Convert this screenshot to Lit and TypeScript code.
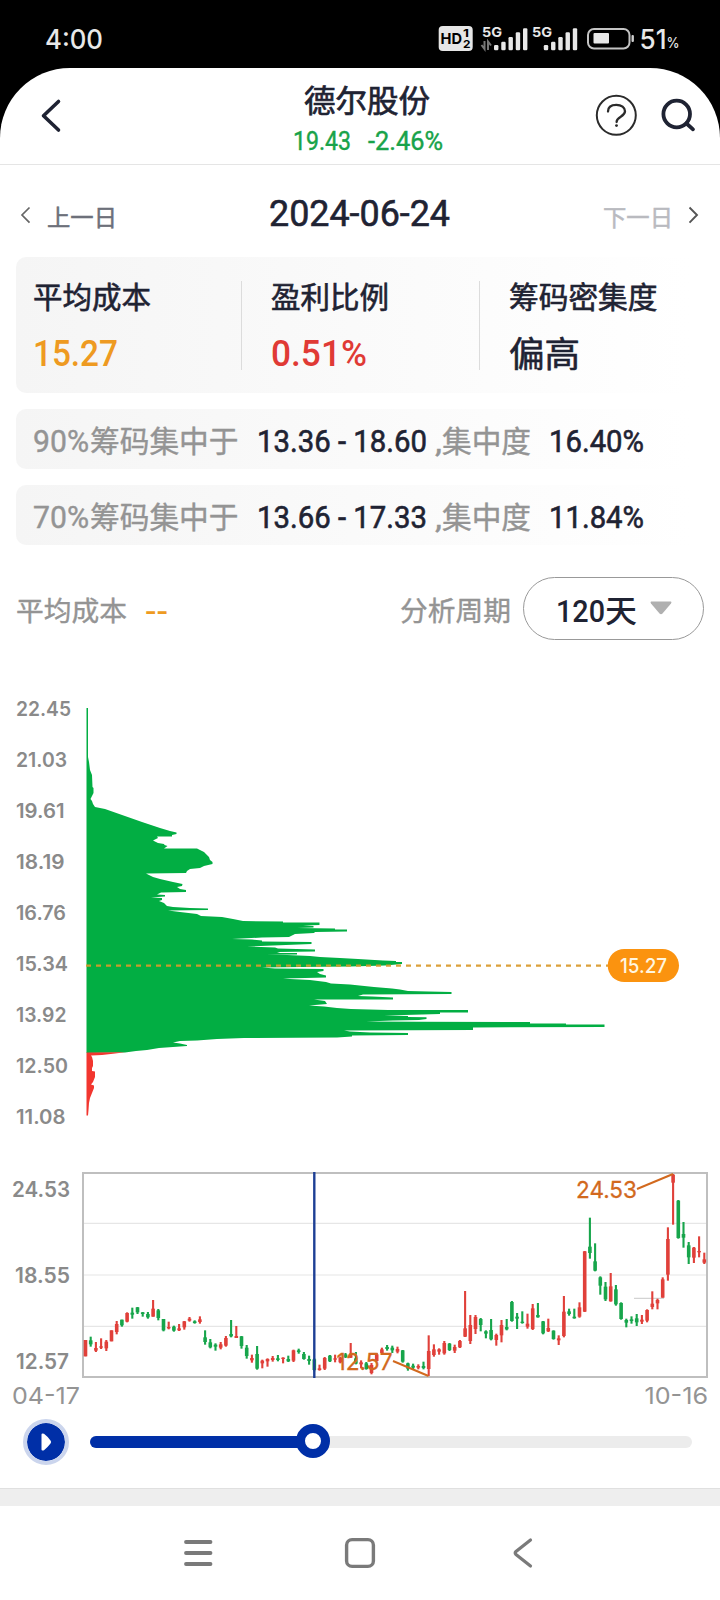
import { LitElement, html, svg, css } from "lit";
import { customElement, property } from "lit/decorators.js";

type Candle = [number, number, number, number, number];

const UP = "#e0403a";
const DOWN = "#17a54b";

/* [isUp, high, bodyTop, bodyBottom, low], measured in thirds of a pixel from the chart origin */
const CANDLES: Candle[] = [
  [1,570,570,619,619],[0,560,571,583,590],[1,576,594,602,606],[1,565,589,593,597],[1,570,575,595,603],
  [1,541,541,574,574],[1,513,522,546,553],[0,509,509,526,530],[1,487,489,515,517],[0,473,488,494,506],
  [0,471,472,487,492],[0,486,487,492,500],[0,486,492,502,506],[1,450,476,500,500],[0,477,481,504,511],
  [0,507,507,541,544],[1,515,531,535,538],[0,527,530,542,545],[1,522,535,541,543],[1,513,514,532,539],
  [1,501,506,512,515],[0,511,514,519,521],[1,499,508,516,521],[0,541,562,576,584],[0,567,577,592,595],
  [0,580,584,590,602],[1,576,583,593,598],[1,558,564,587,590],[0,510,552,559,562],[1,528,558,564,564],
  [0,558,559,588,596],[0,585,593,618,626],[1,614,624,631,638],[0,588,612,656,659],[1,629,632,640,655],
  [1,625,627,634,650],[1,618,624,630,635],[0,615,625,630,634],[1,622,623,627,640],[0,617,627,634,636],
  [1,599,601,632,636],[0,596,601,606,611],[0,606,612,627,629],[0,617,627,633,644],[0,625,628,660,664],
  [1,644,655,660,662],[1,621,624,656,660],[0,615,617,634,636],[1,614,625,629,637],[1,620,623,637,640],
  [0,609,613,622,624],[1,579,611,623,624],[0,606,625,641,643],[1,631,637,643,655],[0,636,640,657,659],
  [1,639,645,669,673],[1,609,613,633,634],[1,593,598,609,611],[0,585,591,597,602],[0,587,593,601,609],
  [1,590,597,605,610],[0,600,601,635,638],[0,638,640,656,662],[0,641,647,653,657],[1,643,648,653,658],
  [0,635,648,654,658],[1,556,603,657,678],[1,583,598,615,620],[1,595,598,605,614],[1,573,579,610,614],
  [0,579,581,600,603],[1,584,591,602,609],[1,570,573,592,594],[1,423,535,560,561],[1,495,525,573,582],
  [1,495,501,537,552],[0,504,507,525,544],[0,541,544,551,565],[0,507,540,568,571],[1,551,555,570,587],
  [1,510,525,556,577],[0,507,531,538,541],[0,453,456,513,515],[0,489,500,506,537],[0,484,515,519,521],
  [1,491,521,530,536],[1,462,475,537,540],[0,459,495,502,503],[0,513,514,550,553],[1,506,534,544,546],
  [0,541,542,567,569],[1,556,565,571,585],[1,438,485,558,562],[0,476,484,492,497],[0,476,500,505,506],
  [1,457,472,500,503],[1,303,304,485,486],[0,203,290,309,326],[0,280,334,362,364],[0,379,382,407,434],
  [0,396,410,448,453],[1,369,409,454,455],[0,405,418,463,467],[0,457,459,507,509],[0,506,510,518,532],
  [0,499,508,513,521],[0,492,505,517,528],[1,495,509,515,522],[1,478,480,512,517],[1,424,461,471,478],
  [1,446,450,460,478],[1,382,388,443,443],[1,232,267,374,392],[1,72,74,98,224],[0,150,152,264,266],
  [0,216,252,263,293],[0,276,286,322,342],[1,291,293,323,339],[1,259,303,307,322],[1,308,328,338,342],
];

const LOSS_AREA =
  "86.5,708 88,708 88,757 89,762 90,770 92,775 92.5,787 93.5,788 93.5,793 91.5,797 90.5,799 92,801 93,804 95,807 105,809 " +
  "142,822 160,828 170,831 176.5,832.5 176.5,834 172,835 172,836.5 157,836.5 158,838 153,840.5 158,843 164,844 164.5,845 " +
  "167.5,846 164,848.5 197,848.5 204,852 209,857 210,860 212.5,862 212.5,864 204,866 200,868 190,869 187,871 186,873 " +
  "146,873.5 151,876 153,877 160,879 173,882 182.5,884 182,886 177,887 180,889 186,890 186,892 161,892.5 157,894.5 165,895 " +
  "165,896.5 151,897.5 162,898 162,900 159,901 164,903 167,906 173,907 190,908 208,908.5 208,910 168,910.5 180,912 197,914 " +
  "201,916 222,917 233,919 243,921 283,921.5 283,922.5 319.5,922.5 319.5,925 303,925.5 313.5,926 313.5,927.5 297,928 " +
  "335,928.5 335,929.5 347,929.5 347,931.5 315,932 314,933 295,934 289,937 262,937.5 232,939 252,939.5 262,940.5 262,941.5 " +
  "311.5,942 311.5,944 273,945.5 247,946.5 275,947.5 278,948.5 315,949.5 315,951.5 277,952 280,953 297,953 297,954.5 " +
  "266,954.8 287,955 310,956 320,957 340,958 358,959 383,960.5 396,961 396,962 402,962 402,964 385,965.5 350,966.5 " +
  "300,967 262,967.5 275,968.5 323.5,969 323.5,971 317,972 320,974 326,975.5 326,977.5 305,978 283,978.5 290,979 310,980 " +
  "318,981 326,982 331,983.5 350,984.5 374,987 392,988.5 400,989.5 408,991 428.5,991.5 451.5,992 451.5,994 363,994.5 " +
  "358,996 372,996.5 393,997.5 393,999.5 314,999.5 325,1001 327,1004 309,1005.5 324,1006.5 337,1008 351,1009 388,1010 " +
  "468,1010 468,1012.5 440,1012.5 440,1014 422,1014.5 404,1015 384,1015.5 408,1016 408,1017 426.5,1017.2 426.5,1019 " +
  "419,1020 393,1020.5 366,1021.5 417,1021.7 530,1022 530,1023.5 566,1023.5 566,1024.5 604.5,1024.5 604.5,1027 473,1027.5 " +
  "473,1030 344,1030.5 350,1031.5 370,1032.5 408,1033 408,1035 352,1035.5 352,1036.5 337,1037.5 244,1038 217,1039 " +
  "197,1040.5 180,1041 173,1042.5 180,1043.5 187,1045 187,1046 159,1048 147,1050 136,1051 125,1052.5 86.5,1053";

const PROFIT_AREA =
  "86.5,1052.5 125,1052.2 113,1053.7 102,1055 91,1055.5 92,1057 93,1061 93,1066 92,1068 92,1071 95,1071.5 95,1077 93,1082 " +
  "91,1084.5 94,1085.5 94,1088 92,1093 90,1098 89,1103 88.5,1110 88,1115.5 86.5,1115.5";

/* Text set to an exact advance width; its box bottom is the baseline. */
@customElement("fit-text")
class FitText extends LitElement {
  @property() text = "";
  @property({ type: Number }) w = 0;
  @property({ type: Number }) size = 20;

  static styles = css`
    :host { display: block; flex: none; }
    svg { display: block; overflow: visible; }
    text { fill: currentColor; stroke: currentColor; stroke-width: var(--grade, 0.4px); white-space: pre; }
  `;

  render() {
    const h = Math.round(this.size * 0.72);
    return html`<svg width=${this.w} height=${h}>
      <text x="0" y=${h} font-size=${this.size} textLength=${this.w} lengthAdjust="spacingAndGlyphs">${this.text}</text>
    </svg>`;
  }
}

const t = (text: string, w: number, size: number, cls = "") =>
  html`<fit-text class=${cls} .text=${text} .w=${w} .size=${size}></fit-text>`;

const st = (text: string, x: number, y: number, w: number, size: number, cls: string) =>
  svg`<text class=${cls} x=${x} y=${y} font-size=${size} textLength=${w} lengthAdjust="spacingAndGlyphs">${text}</text>`;

@customElement("app-root")
class AppRoot extends LitElement {
  static styles = css`
    * { box-sizing: border-box; }
    :host {
      display: block; width: 720px; height: 1600px; overflow: hidden; background: #000;
      font-family: Roboto, "Noto Sans CJK SC", sans-serif; color: #1f2333;
    }
    svg { display: block; }
    .ui { font-family: Inter, "Noto Sans CJK SC", sans-serif; }
    .m { font-weight: 500; --grade: 0; }
    .status { height: 68px; display: flex; justify-content: space-between; color: #e8e8e8; }
    .clock { padding: 30px 0 0 45px; }
    .sheet { height: 1532px; background: #fff; border-radius: 70px 70px 0 0; overflow: hidden; display: flex; flex-direction: column; }
    .header { height: 97px; border-bottom: 1px solid #e5e5e5; display: grid; grid-template-columns: 293px 1fr 130px; }
    .title { display: flex; flex-direction: column; gap: 19px; padding-top: 22px; }
    .title .name { margin-left: 11px; --grade: 0.7px; }
    .quote { display: flex; gap: 17px; color: #18a34a; margin-top: 1px; }
    .dates { height: 92px; display: grid; grid-template-columns: 47px 222px 334px 69px 1fr; }
    .dates .prev { color: #6d707a; margin-top: 44px; --grade: 0.5px; }
    .dates .day { margin-top: 35px; --grade: 0.6px; }
    .dates .next { color: #b9babf; margin-top: 44px; --grade: 0.5px; }
    .card { margin: 0 16px; border-radius: 10px; background: linear-gradient(90deg, #f5f5f5, #fff 98%); flex: none; }
    .stats { height: 136px; display: grid; grid-template-columns: 225px 238px 1fr; padding-top: 24px; }
    .stat { height: 89px; padding: 6px 0 0 17px; display: flex; flex-direction: column; gap: 32px; --grade: 0.6px; }
    .stat + .stat { border-left: 1px solid #dcdcdc; padding-left: 28.5px; }
    .low { margin-top: 2px; }
    .orange { color: #ee9a21; }
    .red { color: #e03a35; }
    .range { height: 60px; margin-top: 16px; display: flex; align-items: flex-end; padding: 0 0 17px 17px; }
    .grey { color: #949494; }
    .gap-s { margin-left: 1px; }
    .gap-l { margin-left: 18px; }
    .gap-c { margin-left: 8px; }
    .range .gap-l { --grade: 0.6px; }
    .filter { height: 63px; margin: 32px 16px 0; display: flex; align-items: flex-end; flex: none; }
    .filter > fit-text { margin-bottom: 19px; }
    .filter .dash { margin: 0 0 18px 18px; }
    .filter .period { margin-left: auto; }
    .pill { margin-left: 12px; width: 181px; height: 63px; border: 1px solid #999; border-radius: 32px; display: flex; align-items: flex-end; padding: 0 0 17px 32px; }
    .pill svg { margin: 0 0 7px 13px; }
    .charts { flex: none; }
    .axis { font-family: Inter, sans-serif; font-weight: 600; fill: #8a8a8a; }
    .edge { font-family: Inter, sans-serif; font-weight: 400; fill: #949494; }
    .note { font-family: Inter, sans-serif; font-weight: 400; fill: #d2691e; stroke: #d2691e; stroke-width: 0.3px; }
    .badge { font-family: Inter, sans-serif; font-weight: 500; fill: #fff6e0; }
    .ink { font-family: Inter, sans-serif; font-weight: 700; fill: #000; }
    .sig { font-family: Inter, sans-serif; font-weight: 700; fill: #e8e8e8; }
    .num { font-family: Inter, sans-serif; font-weight: 500; fill: #e8e8e8; }
    .player { height: 78px; flex: none; display: flex; align-items: center; padding: 0 28px 14px 23px; gap: 21px; }
    .play { width: 46px; height: 46px; border-radius: 50%; border: 4px solid #cbd5ed; background: #002fa7; background-clip: padding-box; display: grid; place-items: center; }
    .track { flex: 1; height: 12px; border-radius: 6px; background: #ececec; }
    .fill { height: 12px; width: 223px; border-radius: 6px 0 0 6px; background: #002fa7; position: relative; }
    .thumb { position: absolute; right: -17px; top: -12px; width: 34px; height: 34px; border-radius: 50%; border: 9px solid #002fa7; background: #fff; }
    .band { height: 18px; flex: none; background: #eee; border-top: 1px solid #e0e0e0; }
    .nav { flex: none; }
  `;

  private bars(x: number) {
    return [45, 41.7, 37, 32.3, 28.3].map(
      (y, i) => svg`<rect x=${x + i * 7.25} y=${y} width="4.4" height=${50.3 - y} rx="1.2" fill="#e8e8e8"/>`);
  }

  private statusBar() {
    return html`<div class="status">
      <div class="clock ui m">${t("4:00", 58, 26.5)}</div>
      <svg width="290" height="68" viewBox="430 0 290 68">
        <rect x="438.7" y="26" width="34" height="25" rx="4" fill="#e6e6e6"/>
        ${st("HD", 440.5, 44, 21.5, 15, "ink")}
        ${st("1", 463, 37, 6, 11, "ink")}
        ${st("2", 463, 48, 7.5, 11, "ink")}
        ${st("5G", 482, 37, 20, 13.5, "sig")}
        ${st("5G", 532, 37, 20, 13.5, "sig")}
        <path d="M481.5 45 L484.5 49 V41 M488 50 V41.5 L491 45.5" fill="none" stroke="#777" stroke-width="2"/>
        ${this.bars(494)}${this.bars(543.8)}
        <rect x="588" y="29" width="41.5" height="19.5" rx="6" fill="none" stroke="#c4c4c4" stroke-width="2"/>
        <rect x="593.5" y="33" width="15.5" height="10.5" rx="1" fill="#e8e8e8"/>
        <rect x="631.5" y="35" width="2.4" height="7" rx="1" fill="#d0d0d0"/>
        ${st("51", 639.5, 49, 27, 26.5, "num")}
        ${st("%", 666.5, 48, 13, 14.5, "num")}
      </svg>
    </div>`;
  }

  private header() {
    return html`<div class="header">
      <svg width="100" height="96" viewBox="0 68 100 96">
        <path d="M58.5 101.5 L43.5 115.7 L58.5 130" fill="none" stroke="#1f2333" stroke-width="3.6" stroke-linecap="round" stroke-linejoin="round"/>
      </svg>
      <div class="title">
        ${t("德尔股份", 126, 31, "name")}
        <div class="quote">${t("19.43", 58, 25)}${t("-2.46%", 75, 25)}</div>
      </div>
      <svg width="130" height="96" viewBox="590 68 130 96">
        <circle cx="616.3" cy="115.3" r="19.5" fill="none" stroke="#2b2b2b" stroke-width="2"/>
        <path d="M608 111.5 C608 107 611.5 104.8 616.3 104.8 C621.5 104.8 625 107.6 625 111.3 C625 117 616.6 116.5 616.6 122" fill="none" stroke="#2b2b2b" stroke-width="2.3" stroke-linecap="round"/>
        <circle cx="616.5" cy="125.6" r="1.4" fill="#2b2b2b"/>
        <circle cx="676.7" cy="114" r="13.3" fill="none" stroke="#1f2333" stroke-width="3.8"/>
        <path d="M686.5 123.5 L693 129.3" stroke="#1f2333" stroke-width="3.8" stroke-linecap="round"/>
      </svg>
    </div>
    <div class="dates">
      <svg width="47" height="92" viewBox="0 165 47 92">
        <path d="M29.5 207.5 L22 215 L29.5 222.7" fill="none" stroke="#666" stroke-width="1.7"/>
      </svg>
      ${t("上一日", 70, 23.2, "prev")}
      ${t("2024-06-24", 181, 36.5, "day")}
      ${t("下一日", 70, 23.2, "next")}
      <svg width="48" height="92" viewBox="672 165 48 92">
        <path d="M689.5 207.5 L697 215 L689.5 222.7" fill="none" stroke="#555" stroke-width="1.9"/>
      </svg>
    </div>`;
  }

  private range(pct: string, span: string, density: string) {
    return html`<div class="card range">
      ${t(pct, 56, 30.5, "grey")}${t("筹码集中于", 148.5, 29.8, "grey gap-s")}
      ${t(span, 170, 30.5, "gap-l")}${t(",", 7, 30, "grey gap-c")}
      ${t("集中度", 89, 29.8, "grey")}${t(density, 95, 30.5, "gap-l")}
    </div>`;
  }

  private chipChart() {
    const prices: [string, number, number][] = [
      ["22.45", 16, 55], ["21.03", 16, 51], ["19.61", 16, 48.5], ["18.19", 16, 48.5], ["16.76", 16, 50],
      ["15.34", 16, 52], ["13.92", 16, 50.5], ["12.50", 16, 52], ["11.08", 16, 49.5],
    ];
    return html`<svg class="charts" width="720" height="520" viewBox="0 640 720 520">
      ${prices.map(([p, x, w], i) => st(p, x, 716.3 + i * 51, w, 20, "axis"))}
      <polygon points=${LOSS_AREA} fill="#02ae43"/>
      <polygon points=${PROFIT_AREA} fill="#f2362f"/>
      <path d="M86 965.6 H608" stroke="#d99a2b" stroke-width="2.2" stroke-dasharray="5 5" opacity="0.92"/>
      <rect x="607.7" y="949" width="71.3" height="33" rx="16.5" fill="#fb930f"/>
      ${st("15.27", 620, 973, 47, 20, "badge")}
    </svg>`;
  }

  private candleChart() {
    return html`<svg class="charts" width="720" height="250" viewBox="0 1160 720 250">
      ${st("24.53", 12, 1197, 58, 21.5, "axis")}
      ${st("18.55", 15, 1283, 55, 21.5, "axis")}
      ${st("12.57", 16, 1369, 53, 21.5, "axis")}
      ${[1223.4, 1275, 1326.4].map((y) => svg`<path d="M84 ${y} H706" stroke="#e6e6e6" stroke-width="1.2"/>`)}
      <path d="M634 1298.3 H664" stroke="#c8c8c8" stroke-width="1"/>
      <rect x="83" y="1173" width="624" height="204" fill="none" stroke="#bfbfbf" stroke-width="2"/>
      ${CANDLES.map(([up, hi, bt, bb, lo], i) => {
        const x = 85.5 + 5.2 * i;
        const c = up ? UP : DOWN;
        return svg`<rect x=${x - 1.05} y=${1150 + hi / 3} width="2.1" height=${(lo - hi) / 3} fill=${c}/>
          <rect x=${x - 1.8} y=${1150 + bt / 3} width="3.6" height=${(bb - bt) / 3} fill=${c}/>`;
      })}
      <path d="M314.3 1172 V1378" stroke="#1d3f95" stroke-width="2.4"/>
      ${st("24.53", 576, 1198, 61, 23.5, "note")}
      <path d="M637 1189 L673 1174" stroke="#d2691e" stroke-width="1.9"/>
      ${st("12.57", 336.5, 1370, 56, 23.5, "note")}
      <path d="M393 1361 L428.5 1376" stroke="#d2691e" stroke-width="1.9"/>
      ${st("04-17", 12, 1404, 68, 23.5, "edge")}
      ${st("10-16", 644.5, 1404, 63.5, 23.5, "edge")}
    </svg>`;
  }

  render() {
    return html`${this.statusBar()}
      <div class="sheet">
        ${this.header()}
        <div class="card stats">
          <div class="stat">${t("平均成本", 118, 29.5)}${t("15.27", 85, 36, "orange m")}</div>
          <div class="stat">${t("盈利比例", 118, 29.5)}${t("0.51%", 96, 36, "red m")}</div>
          <div class="stat">${t("筹码密集度", 148.5, 29.5)}${t("偏高", 71, 35, "low")}</div>
        </div>
        ${this.range("90%", "13.36 - 18.60", "16.40%")}
        ${this.range("70%", "13.66 - 17.33", "11.84%")}
        <div class="filter">
          ${t("平均成本", 111, 27.5, "grey")}${t("--", 23, 30, "orange dash m")}
          ${t("分析周期", 111, 27.5, "grey period")}
          <div class="pill">${t("120", 49, 32, "m")}${t("天", 32, 31, "m")}
            <svg width="22" height="14"><path d="M1 0.5 H21 Q22 1 21 2.5 L12.5 12.5 Q11 14 9.5 12.5 L1 2.5 Q0 1 1 0.5Z" fill="#b0b0b0"/></svg>
          </div>
        </div>
        ${this.chipChart()}
        ${this.candleChart()}
        <div class="player">
          <div class="play"><svg width="12" height="18" viewBox="0 0 12 18"><path d="M1.5 1.5 Q1.5 0 4 0.8 Q7 3 10.5 7.5 Q11.8 9 10.5 10.5 Q7 15 4 17.2 Q1.5 18 1.5 16.5Z" fill="#fff"/></svg></div>
          <div class="track"><div class="fill"><div class="thumb"></div></div></div>
        </div>
        <div class="band"></div>
        <svg class="nav" width="720" height="94" viewBox="0 1506 720 94" fill="none" stroke="#7a7a7a">
          <path d="M186 1542 H210.5 M186 1553 H210.5 M186 1564 H210.5" stroke-width="3.8" stroke-linecap="round"/>
          <rect x="346.6" y="1539.6" width="26.8" height="26.8" rx="5.5" stroke-width="3.4"/>
          <path d="M530.5 1540 L516 1551.5 Q514.5 1553 516 1554.5 L530.5 1566" stroke-width="3.2" stroke-linecap="round"/>
        </svg>
      </div>`;
  }
}
